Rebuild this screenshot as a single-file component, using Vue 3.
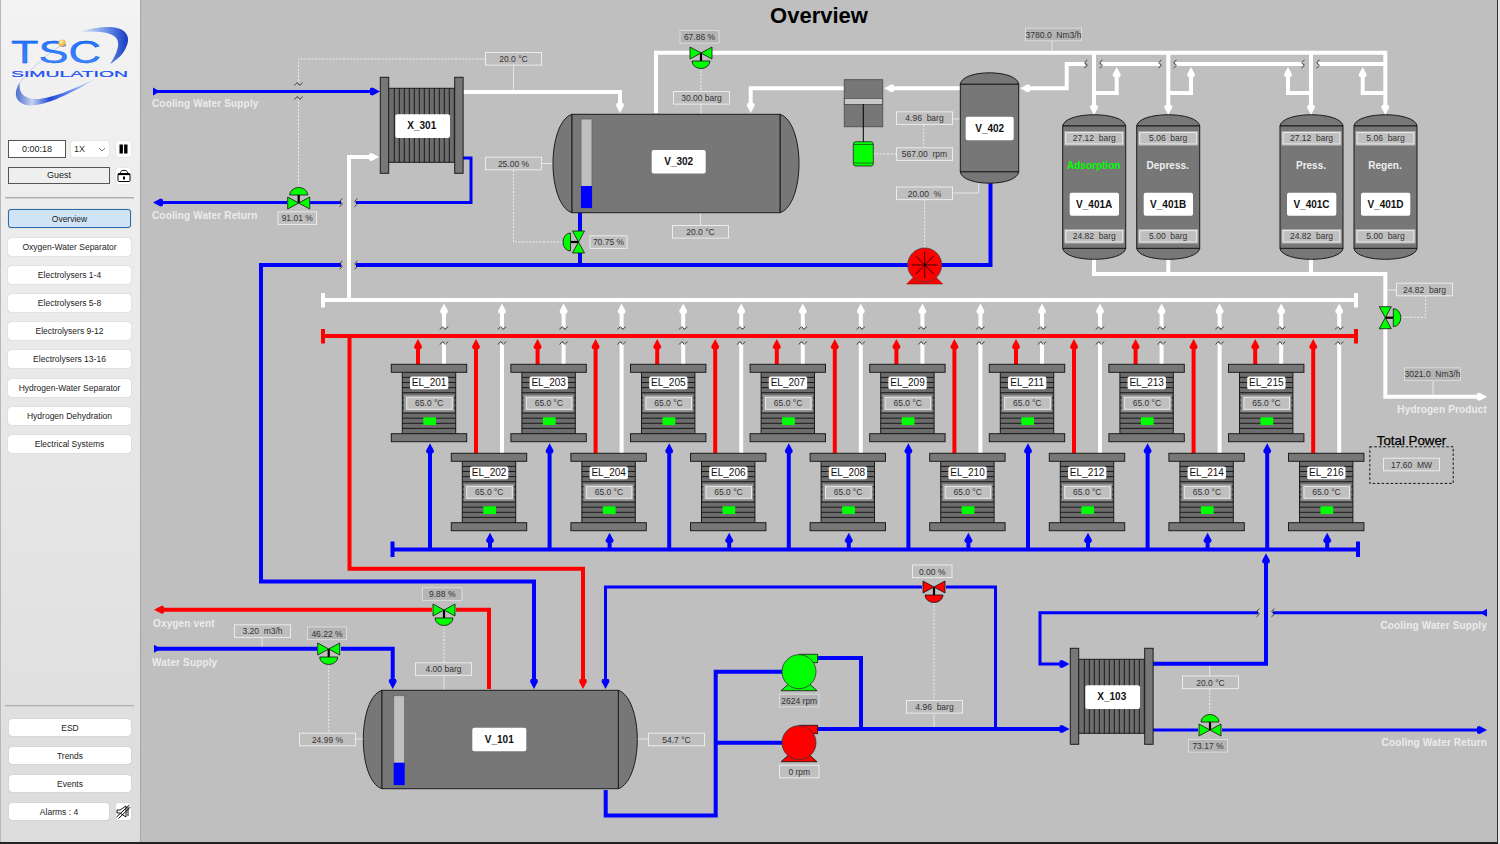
<template>
  <div class="screen">
    <aside class="sidebar">
      <svg class="logo" viewBox="0 0 124 84" width="124" height="84">
        <defs>
          <linearGradient id="swoosh" x1="0" y1="0" x2="1" y2="0">
            <stop offset="0" stop-color="#e4ebf9" />
            <stop offset="0.55" stop-color="#6d93ea" />
            <stop offset="1" stop-color="#1638c0" />
          </linearGradient>
          <linearGradient id="swoosh2" x1="0" y1="0" x2="1" y2="0">
            <stop offset="0" stop-color="#4a6ed0" />
            <stop offset="0.2" stop-color="#c4d2f0" />
            <stop offset="0.42" stop-color="#1f48d8" />
            <stop offset="0.7" stop-color="#6f97ee" />
            <stop offset="1" stop-color="#e8eefb" />
          </linearGradient>
          <linearGradient id="letters" x1="0" y1="0" x2="0" y2="1">
            <stop offset="0" stop-color="#1a72ff" />
            <stop offset="1" stop-color="#3f8cff" />
          </linearGradient>
          <radialGradient id="ball" cx="0.4" cy="0.35" r="0.7">
            <stop offset="0" stop-color="#fff2b0" />
            <stop offset="1" stop-color="#e09a10" />
          </radialGradient>
        </defs>
        <path d="M71 6 C85 1 100 0 108 2 C118 4 121 12 118 19 C115 28 108 34 101 38 C106 31 110 22 109 16 C108 8 95 4 71 6 Z" fill="url(#swoosh)" />
        <path d="M11 57 C5 64 5 74 14 78 C28 84 58 70 88 52 C65 63 42 73 27 73 C15 73 9 66 11 57 Z" fill="url(#swoosh2)" />
        <path d="M8 60 C22 42 38 28 54 18" fill="none" stroke="#9fb6e6" stroke-width="0.6" />
        <text x="2" y="37" class="logo-big" textLength="90" lengthAdjust="spacingAndGlyphs">TSC</text>
        <text x="2" y="51" class="logo-small" textLength="117" lengthAdjust="spacingAndGlyphs">SIMULATION</text>
        <circle cx="53" cy="17" r="3.6" fill="url(#ball)" />
      </svg>

      <div class="ctrl-row first">
        <div class="clock">0:00:18</div>
        <div class="speed">
          <span>1X</span>
          <svg width="8" height="5" viewBox="0 0 8 5"><path d="M1 1 L4 4 L7 1" fill="none" stroke="#777" stroke-width="1" /></svg>
        </div>
        <button class="icon-btn">
          <svg width="9" height="10" viewBox="0 0 9 10"><rect x="0.5" y="0.5" width="3.4" height="9" fill="#000" /><rect x="5.1" y="0.5" width="3.4" height="9" fill="#000" /></svg>
        </button>
      </div>
      <div class="ctrl-row second">
        <div class="user">Guest</div>
        <button class="icon-btn">
          <svg width="14" height="13" viewBox="0 0 14 13">
            <path d="M3.5 5.5 V3.5 C3.5 0.6 10.5 0.6 10.5 3.5 V5.5" fill="none" stroke="#000" stroke-width="1" />
            <rect x="1" y="4.5" width="12" height="8" rx="1" fill="#fff" stroke="#000" stroke-width="1" />
            <rect x="1" y="4.5" width="12" height="1.6" fill="#000" />
            <rect x="6" y="7.5" width="2" height="3" fill="#000" />
          </svg>
        </button>
      </div>

      <div class="divider top"></div>

      <nav class="nav">
        <button v-for="item in navItems" :key="item" class="nav-btn" :class="{ active: item === 'Overview' }">{{ item }}</button>
      </nav>

      <div class="bottom">
        <div class="divider"></div>
        <div class="bottom-list">
          <button v-for="item in bottomItems" :key="item" class="nav-btn small">{{ item }}</button>
          <div class="alarm-row">
            <button class="nav-btn small alarm">Alarms : 4</button>
            <button class="icon-btn mute">
              <svg width="15" height="15" viewBox="0 0 15 15">
                <path d="M1 6 H4 L10 2 V13 L4 9 H1 Z" fill="none" stroke="#000" stroke-width="0.9" />
                <path d="M12 3 V12" stroke="#000" stroke-width="0.9" />
                <path d="M0.5 13 L13.5 1 M2.5 14.5 L14.5 3" stroke="#000" stroke-width="1" />
              </svg>
            </button>
          </div>
        </div>
      </div>
    </aside>

    <main class="canvas">
      <svg class="diagram" viewBox="141 0 1356 842" width="1356" height="842">
        <text x="819" y="15" class="title">Overview</text>

        <!-- signal lines -->
        <path v-for="d in solidLinks" :key="d" :d="d" class="link" />
        <path v-for="d in dottedLinks" :key="d" :d="d" class="dotted" />

        <!-- pipes -->
        <path v-for="p in pipes" :key="p.d" :d="p.d" fill="none" :stroke="p.c" :stroke-width="p.w || 4" stroke-linejoin="miter" />
        <polygon v-for="a in arrows" :key="a.points" :points="a.points" :fill="a.c" />
        <path v-for="b in breaks" :key="b" :d="b" class="break" />

        <!-- heat exchangers -->
        <g v-for="x in exchangers" :key="x.name" :transform="`translate(${x.x} ${x.y})`">
          <rect x="8" y="11" width="67" height="74" class="steel dark" />
          <path v-for="n in 13" :key="n" :d="`M${9 + n * 5} 11 V85`" class="fin" />
          <rect x="0" y="0" width="8.4" height="96" class="steel" />
          <rect x="74.4" y="0" width="8.4" height="96" class="steel" />
          <rect x="15" y="37" width="54.7" height="23.7" rx="2" class="name-box" />
          <text x="41.5" y="48.6" class="name">{{ x.name }}</text>
        </g>

        <!-- horizontal vessels -->
        <g v-for="v in drums" :key="v.name">
          <path :d="v.cap" class="steel" />
          <path :d="v.cap2" class="steel" />
          <rect :x="v.x" :y="v.y" :width="v.w" :height="v.h" class="steel" />
          <rect :x="v.barX" :y="v.barY" width="11" :height="v.barH" class="bar" />
          <rect :x="v.barX" :y="v.levelY" width="11" :height="v.barY + v.barH - v.levelY" fill="#0000ff" />
          <rect :x="v.labelX" :y="v.labelY" width="54" height="23.6" rx="2" class="name-box" />
          <text :x="v.labelX + 27" :y="v.labelY + 11.8" class="name">{{ v.name }}</text>
        </g>

        <!-- V_402 -->
        <path d="M960.3 84.3 C962 69 1017 69 1018.7 84.3 Z" class="steel" />
        <path d="M960.3 171.7 C962 187 1017 187 1018.7 171.7 Z" class="steel" />
        <rect x="960.3" y="84.3" width="58.4" height="87.4" class="steel" />
        <rect x="965.7" y="116.7" width="48" height="23.6" rx="2" class="name-box" />
        <text x="989.7" y="128.3" class="name">V_402</text>

        <!-- adsorbers -->
        <g v-for="a in adsorbers" :key="a.name" :transform="`translate(${a.x} 0)`">
          <path d="M0 126 C2 111 61 111 63 126 Z" class="steel" />
          <path d="M0 248.3 C2 263 61 263 63 248.3 Z" class="steel" />
          <rect x="0" y="126" width="63" height="122.3" class="steel" />
          <rect x="1.5" y="131" width="60" height="14.7" fill="#a8a8a8" />
          <rect x="3" y="132.6" width="57" height="11.4" class="tag-box" />
          <text x="31.5" y="138" class="tag">{{ a.top }}</text>
          <text x="31" y="165.8" class="state" :fill="a.stateColor">{{ a.state }}</text>
          <rect x="7" y="192.7" width="49.3" height="23" rx="2" class="name-box" />
          <text x="31.5" y="204.1" class="name">{{ a.name }}</text>
          <rect x="1.5" y="229" width="60" height="14.7" fill="#a8a8a8" />
          <rect x="3" y="230.6" width="57" height="11.4" class="tag-box" />
          <text x="31.5" y="236" class="tag">{{ a.bottom }}</text>
        </g>

        <!-- compressor -->
        <rect x="844.3" y="79.7" width="38.4" height="47" fill="#777" stroke="#555" stroke-width="1" />
        <rect x="844.3" y="98.3" width="38.4" height="6" fill="#c8c8c8" stroke="#333" stroke-width="0.6" />
        <path d="M863.3 104 V142" stroke="#000" stroke-width="1" />
        <rect x="853.3" y="141.7" width="20" height="24.3" rx="2.5" fill="#00ff00" stroke="#222" stroke-width="0.8" />
        <path d="M853.3 144.5 H873.3 M853.3 163 H873.3" stroke="#222" stroke-width="0.6" />

        <!-- electrolysers -->
        <g v-for="e in electrolysers" :key="e.name" :transform="`translate(${e.x} ${e.y})`">
          <rect x="11" y="8" width="53.4" height="61.4" class="steel dark" />
          <path v-for="n in 11" :key="n" :d="`M11 ${8 + n * 5.1} H64.4`" class="fin" />
          <rect x="0" y="0" width="75.4" height="8" class="steel" />
          <rect x="0" y="69.4" width="75.4" height="8" class="steel" />
          <rect x="18.7" :y="e.ny - 6.3" width="38.3" height="12.6" rx="2" class="name-box" />
          <text x="37.8" :y="e.ny" class="el-name">{{ e.name }}</text>
          <rect x="12.7" y="30.7" width="50" height="16.7" fill="#999" />
          <rect x="15.4" y="33" width="45.6" height="12" class="tag-box" />
          <text x="38" y="39.2" class="tag">65.0 °C</text>
          <rect x="32" y="53" width="12.7" height="7.7" fill="#00ff00" />
        </g>

        <!-- valves -->
        <g v-for="v in valves" :key="v.x + '-' + v.y" :transform="`translate(${v.x} ${v.y}) rotate(${v.r})`">
          <path d="M0 0 V-8" stroke="#000" stroke-width="2.2" />
          <path d="M-9 -8 A9 7.5 0 0 1 9 -8 Z" :fill="v.c" class="sym" />
          <polygon points="-11,-6 -11,6 0,0" :fill="v.c" class="sym" />
          <polygon points="11,-6 11,6 0,0" :fill="v.c" class="sym" />
        </g>

        <!-- pumps -->
        <g v-for="p in pumps" :key="p.y" :transform="`translate(799 ${p.y})`">
          <polygon points="-18,19 18,19 9,11 -9,11" :fill="p.c" class="sym" />
          <polygon points="0,-17.4 18.6,-17.4 18.6,-9 10,-9" :fill="p.c" class="sym" />
          <circle r="17" :fill="p.c" stroke="#333" stroke-width="0.8" />
        </g>
        <g transform="translate(924.7 265)">
          <polygon points="-18,19 18,19 9,10 -9,10" fill="#ff0000" stroke="#7a0000" stroke-width="0.5" />
          <circle r="17" fill="#ff0000" stroke="#444" stroke-width="0.8" />
          <path v-for="n in 4" :key="n" d="M-13 0 H13" stroke="#000" stroke-width="0.8" :transform="`rotate(${n * 45})`" />
        </g>

        <!-- tags -->
        <g v-for="t in tags" :key="t.t + t.x">
          <rect :x="t.x" :y="t.y" :width="t.w" height="12.6" class="tag-box" :class="{ dim: t.dim }" />
          <text :x="t.x + t.w / 2" :y="t.y + 6.5" class="tag">{{ t.t }}</text>
        </g>

        <!-- stream labels -->
        <text x="152" y="103" class="stream">Cooling Water Supply</text>
        <text x="152" y="215" class="stream">Cooling Water Return</text>
        <text x="153" y="623" class="stream">Oxygen vent</text>
        <text x="152" y="662" class="stream">Water Supply</text>
        <text x="1487" y="409" class="stream end">Hydrogen Product</text>
        <text x="1487" y="625" class="stream end">Cooling Water Supply</text>
        <text x="1487" y="742" class="stream end">Cooling Water Return</text>

        <text x="1411.5" y="440" class="total">Total Power</text>
        <rect x="1369.8" y="446.8" width="83.4" height="36.6" class="dash" />
      </svg>
    </main>
  </div>
</template>

<script setup>
const navItems = [
  'Overview',
  'Oxygen-Water Separator',
  'Electrolysers 1-4',
  'Electrolysers 5-8',
  'Electrolysers 9-12',
  'Electrolysers 13-16',
  'Hydrogen-Water Separator',
  'Hydrogen Dehydration',
  'Electrical Systems'
]
const bottomItems = ['ESD', 'Trends', 'Events']

const BLUE = '#0000ff'
const RED = '#ff0000'
const WHITE = '#ffffff'
const GREEN = '#00ff00'
const STEP = 119.6

// builds an arrow head polygon, (x, y) is the tip
function arrow(x, y, dir, c, w = 8, l = 10) {
  const v = { u: [0, 1], d: [0, -1], l: [1, 0], r: [-1, 0] }[dir]
  const n = [v[1], v[0]]
  const pt = (a, b) => `${x + v[0] * a + n[0] * b},${y + v[1] * a + n[1] * b}`
  return {
    c,
    points: [pt(0, 0), pt(l * 0.75, w / 2), pt(l, w * 0.4), pt(l, -w * 0.4), pt(l * 0.75, -w / 2)].join(' ')
  }
}

const sBreak = (x, y) => `M${x + 1.5} ${y - 4} Q${x - 3} ${y - 1} ${x} ${y} Q${x + 3} ${y + 1} ${x - 1.5} ${y + 4}`
const tBreak = (x, y) => `M${x - 4} ${y + 1.5} Q${x - 1} ${y - 3} ${x} ${y} Q${x + 1} ${y + 3} ${x + 4} ${y - 1.5}`

const pipes = [
  // cooling water X_301
  { c: BLUE, w: 3, d: 'M153 91.5 H372' },
  { c: BLUE, w: 3, d: 'M160 202.6 H287' },
  { c: BLUE, w: 3, d: 'M310 202.6 H341' },
  { c: BLUE, w: 3, d: 'M356 202.6 H471 V158 H463' },
  // recirculation
  { c: BLUE, d: 'M341 265 H261 V581.5 H534 V680' },
  { c: BLUE, d: 'M356 265 H908' },
  { c: BLUE, d: 'M940 265 H990.5 V183' },
  { c: BLUE, d: 'M580 213 V232' },
  { c: BLUE, d: 'M580 252 V265' },
  // hydrogen
  { c: WHITE, d: 'M349 300 V157 H371' },
  { c: WHITE, d: 'M463 92 H620 V105' },
  { c: WHITE, d: 'M656 113 V52.7 H690' },
  { c: WHITE, d: 'M712 52.7 H1385.3 V107' },
  { c: WHITE, d: 'M960 88.3 H892' },
  { c: WHITE, d: 'M844 88.3 H750.7 V105' },
  { c: WHITE, d: 'M1028 88.3 H1066.7 V64 H1085' },
  { c: WHITE, d: 'M1101 64 H1160' },
  { c: WHITE, d: 'M1175 64 H1303' },
  { c: WHITE, d: 'M1318 64 H1385' },
  { c: WHITE, d: 'M1094 52.7 V107' },
  { c: WHITE, d: 'M1168.3 52.7 V107' },
  { c: WHITE, d: 'M1311 52.7 V107' },
  { c: WHITE, d: 'M1094 93 H1116.7 V75' },
  { c: WHITE, d: 'M1168.3 93 H1191 V75' },
  { c: WHITE, d: 'M1311 93 H1288 V75' },
  { c: WHITE, d: 'M1385.3 93 H1362.7 V75' },
  { c: WHITE, d: 'M1094 258 V274 H1385.3 V307' },
  { c: WHITE, d: 'M1168.3 258 V274' },
  { c: WHITE, d: 'M1311 258 V274' },
  { c: WHITE, d: 'M1385.3 328 V396.7 H1478' },
  // headers
  { c: WHITE, d: 'M323 300 H1356' },
  { c: WHITE, d: 'M323 293 V307.5' },
  { c: WHITE, d: 'M1356 293 V307.5' },
  { c: RED, d: 'M323 336 H1356' },
  { c: RED, d: 'M323 329 V343.5' },
  { c: RED, d: 'M1356 329 V343.5' },
  { c: BLUE, d: 'M392.5 549.5 H1358' },
  { c: BLUE, d: 'M392.5 541.5 V557' },
  { c: BLUE, d: 'M1358 541.5 V557' },
  // oxygen
  { c: RED, d: 'M349.5 336 V568.7 H583 V680' },
  { c: RED, d: 'M489 689 V609.7 H456' },
  { c: RED, d: 'M432 609.7 H163' },
  // water supply
  { c: BLUE, d: 'M154 648.7 H317' },
  { c: BLUE, d: 'M341 648.7 H392.7 V680' },
  // pumps loop
  { c: BLUE, d: 'M605.7 790 V815.5 H715.7 V671.7 H783' },
  { c: BLUE, d: 'M715.7 742.7 H783' },
  { c: BLUE, d: 'M817 658 H861 V729' },
  { c: BLUE, d: 'M817 729 H1060' },
  { c: BLUE, w: 3, d: 'M605.5 680 V587 H922' },
  { c: BLUE, w: 3, d: 'M946 587 H995.5 V729' },
  // X_103
  { c: BLUE, d: 'M1153 663.7 H1266 V563' },
  { c: BLUE, w: 3, d: 'M1153 730 H1198' },
  { c: BLUE, w: 3, d: 'M1222 730 H1478' },
  { c: BLUE, w: 3, d: 'M1486 612.7 H1273' },
  { c: BLUE, w: 3, d: 'M1258 612.7 H1040 V664 H1060' }
]

const arrows = [
  arrow(380, 91.5, 'r', BLUE),
  arrow(153, 202.6, 'l', BLUE),
  arrow(379, 157, 'r', WHITE),
  arrow(620, 113, 'd', WHITE),
  arrow(750.7, 113, 'd', WHITE),
  arrow(884, 88.3, 'l', WHITE),
  arrow(1020, 88.3, 'l', WHITE),
  arrow(1094, 115, 'd', WHITE),
  arrow(1168.3, 115, 'd', WHITE),
  arrow(1311, 115, 'd', WHITE),
  arrow(1385.3, 115, 'd', WHITE),
  arrow(1116.7, 67, 'u', WHITE),
  arrow(1191, 67, 'u', WHITE),
  arrow(1288, 67, 'u', WHITE),
  arrow(1362.7, 67, 'u', WHITE),
  arrow(1487, 396.7, 'r', WHITE),
  arrow(534, 689, 'd', BLUE),
  arrow(583, 689, 'd', RED),
  arrow(392.7, 689, 'd', BLUE),
  arrow(605.5, 689, 'd', BLUE),
  arrow(154, 609.7, 'l', RED),
  arrow(1069.5, 729, 'r', BLUE),
  arrow(1069.5, 664, 'r', BLUE),
  arrow(1266, 553.3, 'u', BLUE),
  arrow(1487, 730, 'r', BLUE),
  // feed markers, the flat side is on the outlet
  { c: BLUE, points: '153,87.5 153,95.5 160,91.5' },
  { c: BLUE, points: '154,644.7 154,652.7 161,648.7' },
  { c: BLUE, points: '1487,608.7 1487,616.7 1480,612.7' }
]

const breaks = [
  sBreak(341, 202.6), sBreak(356, 202.6), sBreak(341, 265), sBreak(356, 265),
  sBreak(1086, 64), sBreak(1101, 64), sBreak(1160, 64), sBreak(1175, 64),
  sBreak(1303, 64), sBreak(1318, 64), sBreak(1258, 612.7), sBreak(1273, 612.7),
  tBreak(298.5, 84), tBreak(298.5, 98)
]

const electrolysers = []
for (let k = 0; k < 8; k++) {
  const dx = k * STEP
  electrolysers.push({ name: 'EL_' + (201 + k * 2), x: 391.3 + dx, y: 364.3, ny: 18.6 })
  electrolysers.push({ name: 'EL_' + (202 + k * 2), x: 451.3 + dx, y: 453.3, ny: 19.6 })

  pipes.push({ c: RED, d: `M${418 + dx} 364.3 V348` })
  pipes.push({ c: RED, d: `M${476 + dx} 453.3 V348` })
  pipes.push({ c: WHITE, d: `M${444 + dx} 364.3 V343` })
  pipes.push({ c: WHITE, d: `M${444 + dx} 328 V312` })
  pipes.push({ c: WHITE, d: `M${502 + dx} 453.3 V343` })
  pipes.push({ c: WHITE, d: `M${502 + dx} 328 V312` })
  pipes.push({ c: BLUE, d: `M${430 + dx} 549.5 V452` })
  pipes.push({ c: BLUE, d: `M${490 + dx} 549.5 V540` })

  arrows.push(arrow(418 + dx, 339, 'u', RED))
  arrows.push(arrow(476 + dx, 339, 'u', RED))
  arrows.push(arrow(444 + dx, 303.5, 'u', WHITE))
  arrows.push(arrow(502 + dx, 303.5, 'u', WHITE))
  arrows.push(arrow(430 + dx, 443.3, 'u', BLUE))
  arrows.push(arrow(490 + dx, 532.7, 'u', BLUE))

  breaks.push(tBreak(444 + dx, 328), tBreak(444 + dx, 343), tBreak(502 + dx, 328), tBreak(502 + dx, 343))
}

const exchangers = [
  { name: 'X_301', x: 380.3, y: 77.3 },
  { name: 'X_103', x: 1070.3, y: 648.3 }
]

const drums = [
  {
    name: 'V_302', x: 572, y: 114.3, w: 208, h: 98.4,
    cap: 'M572 114.3 C560 118 553 140 553 163.5 C553 187 560 209 572 212.7 Z',
    cap2: 'M780 114.3 C792 118 799 140 799 163.5 C799 187 792 209 780 212.7 Z',
    barX: 581, barY: 119, barH: 89, levelY: 186, labelX: 651.7, labelY: 150
  },
  {
    name: 'V_101', x: 382, y: 690.3, w: 236.3, h: 98.4,
    cap: 'M382 690.3 C370 694 363.3 716 363.3 739.5 C363.3 763 370 785 382 788.7 Z',
    cap2: 'M618.3 690.3 C630 694 637.3 716 637.3 739.5 C637.3 763 630 785 618.3 788.7 Z',
    barX: 393.7, barY: 695.7, barH: 89.3, levelY: 762.7, labelX: 472.3, labelY: 727.7
  }
]

const adsorbers = [
  { name: 'V_401A', x: 1062.7, top: '27.12  barg', bottom: '24.82  barg', state: 'Adsorption', stateColor: GREEN },
  { name: 'V_401B', x: 1136.7, top: '5.06  barg', bottom: '5.00  barg', state: 'Depress.', stateColor: '#eeeeee' },
  { name: 'V_401C', x: 1280, top: '27.12  barg', bottom: '24.82  barg', state: 'Press.', stateColor: '#eeeeee' },
  { name: 'V_401D', x: 1354, top: '5.06  barg', bottom: '5.00  barg', state: 'Regen.', stateColor: '#eeeeee' }
]

const valves = [
  { x: 298.7, y: 203, r: 0, c: GREEN },
  { x: 701, y: 53, r: 180, c: GREEN },
  { x: 578.5, y: 242, r: -90, c: GREEN },
  { x: 1385.3, y: 317.7, r: 90, c: GREEN },
  { x: 444, y: 610, r: 180, c: GREEN },
  { x: 328.7, y: 649, r: 180, c: GREEN },
  { x: 934, y: 587, r: 180, c: RED },
  { x: 1210, y: 730, r: 0, c: GREEN }
]

const pumps = [
  { y: 671.7, c: GREEN },
  { y: 742.7, c: RED }
]

const tags = [
  { t: '20.0 °C', x: 485.5, y: 52.5, w: 56 },
  { t: '25.00 %', x: 485.5, y: 157.2, w: 56 },
  { t: '91.01 %', x: 278, y: 211.8, w: 38.5 },
  { t: '70.75 %', x: 590, y: 235.8, w: 37 },
  { t: '67.86 %', x: 680, y: 30.5, w: 39, dim: true },
  { t: '30.00 barg', x: 673.5, y: 91.5, w: 56 },
  { t: '20.0 °C', x: 672.5, y: 225.5, w: 56 },
  { t: '4.96  barg', x: 896.5, y: 111.8, w: 56 },
  { t: '567.00  rpm', x: 896.5, y: 147.8, w: 56 },
  { t: '20.00  %', x: 896.5, y: 187, w: 56 },
  { t: '3780.0  Nm3/h', x: 1025.5, y: 28.2, w: 56, dim: true },
  { t: '24.82  barg', x: 1396.5, y: 283.2, w: 56 },
  { t: '3021.0  Nm3/h', x: 1404.5, y: 367.8, w: 56, dim: true },
  { t: '17.60  MW', x: 1383.5, y: 458.2, w: 56 },
  { t: '9.88 %', x: 422.5, y: 587.8, w: 39.5, dim: true },
  { t: '46.22 %', x: 307.5, y: 627, w: 39, dim: true },
  { t: '3.20  m3/h', x: 234.5, y: 624.8, w: 56 },
  { t: '4.00 barg', x: 415.5, y: 662.8, w: 56 },
  { t: '24.99 %', x: 299.5, y: 733.2, w: 56 },
  { t: '54.7 °C', x: 648.5, y: 733.2, w: 56 },
  { t: '2624 rpm', x: 779.5, y: 694.2, w: 39.5, dim: true },
  { t: '0 rpm', x: 779.5, y: 765.2, w: 39.5 },
  { t: '0.00 %', x: 912.5, y: 565, w: 39.5 },
  { t: '4.96  barg', x: 906.5, y: 700.5, w: 56 },
  { t: '20.0 °C', x: 1182.5, y: 676, w: 56 },
  { t: '73.17 %', x: 1188.5, y: 739.5, w: 39, dim: true }
]

const solidLinks = [
  'M513.5 65 V92',
  'M542 163.5 H553',
  'M701 104 V114',
  'M700.5 213 V225',
  'M953 119 H960',
  'M953 193 H978.7 V182',
  'M1052 41 V53',
  'M1386 290 H1396',
  'M1433 381 V397',
  'M262 637 V649',
  'M444 676 V690',
  'M356 739 H363',
  'M637 739 H648',
  'M934 714 V729',
  'M1209.7 664 V676'
]

const dottedLinks = [
  'M485 59 H298.5 V84',
  'M298.5 98 V186',
  'M513.5 170 V242 H567',
  'M701 67 V91',
  'M873 154 H896',
  'M923.7 125 V147',
  'M924.7 200 V248',
  'M1425.7 296 V317.3 H1400',
  'M444 625 V662',
  'M328.7 663 V733',
  'M934 602 V700',
  'M1209.7 689 V716'
]
</script>

<style scoped>
.screen {
  display: flex;
  width: 1497px;
  height: 842px;
  border-right: 1px solid #333;
  border-bottom: 2px solid #222;
  font-family: "Liberation Sans", Arial, sans-serif;
}
.sidebar {
  display: flex;
  flex-direction: column;
  box-sizing: border-box;
  width: 141px;
  height: 842px;
  padding: 0 9px 0 7px;
  border-left: 1px solid #b8b8b8;
  border-right: 1px solid #a6a6a6;
  background: linear-gradient(#f3f3f3, #dcdcdc);
  flex-shrink: 0;
}
.logo {
  display: block;
  margin: 26px 0 0 1px;
}
.ctrl-row {
  display: flex;
  align-items: center;
}
.ctrl-row.first {
  margin-top: 30px;
  height: 18px;
}
.ctrl-row.second {
  margin-top: 9px;
  height: 17px;
}
.clock {
  box-sizing: border-box;
  width: 58px;
  height: 18px;
  margin-right: 5px;
  background: #fff;
  border: 1px solid #555;
  font-size: 9px;
  line-height: 16px;
  text-align: center;
  color: #222;
}
.speed {
  display: flex;
  align-items: center;
  justify-content: space-between;
  box-sizing: border-box;
  width: 38px;
  height: 16px;
  margin-right: 7px;
  padding: 0 3px;
  background: #fff;
  border-radius: 2px;
  box-shadow: 0 0 1px #aaa;
  font-size: 9px;
  color: #333;
}
.icon-btn {
  display: flex;
  align-items: center;
  justify-content: center;
  width: 15px;
  height: 16px;
  padding: 0;
  border: none;
  border-radius: 2px;
  background: #fff;
  box-shadow: 0 0 1px #aaa;
}
.user {
  box-sizing: border-box;
  width: 102px;
  height: 17px;
  margin-right: 6px;
  background: #efefef;
  border: 1px solid #555;
  font-size: 9px;
  line-height: 15px;
  text-align: center;
  color: #222;
}
.divider {
  height: 1px;
  margin: 0 -3px;
  background: #b0b0b0;
  border-bottom: 1px solid #d0d0d0;
}
.divider.top {
  margin-top: 13px;
}
.nav {
  display: flex;
  flex-direction: column;
  gap: 10.1px;
  margin-top: 10px;
}
.nav-btn {
  box-sizing: border-box;
  width: 123px;
  height: 18px;
  padding: 0;
  border: none;
  border-radius: 3px;
  background: #fff;
  box-shadow: 0 0 1px #999;
  font-family: inherit;
  font-size: 8.5px;
  color: #222;
}
.nav-btn.active {
  height: 19px;
  background: #cfe4f7;
  border: 1px solid #2b6ca3;
}
.bottom {
  margin-top: auto;
  padding-bottom: 22px;
}
.bottom-list {
  display: flex;
  flex-direction: column;
  gap: 11px;
  margin-top: 12px;
  padding-left: 1px;
}
.nav-btn.small {
  width: 122px;
  height: 17px;
}
.alarm-row {
  display: flex;
  align-items: center;
  gap: 7px;
}
.nav-btn.small.alarm {
  width: 100px;
}
.icon-btn.mute {
  height: 17px;
}
.canvas {
  flex: 1;
  background: #bfbfbf;
  overflow: hidden;
}
.diagram {
  display: block;
}
.logo-big {
  font-size: 31px;
  fill: url(#letters);
  stroke: #0a45e8;
  stroke-width: 0.3;
}
.logo-small {
  font-size: 9.5px;
  fill: #1a50f0;
  stroke: #1a50f0;
  stroke-width: 0.2;
}
.title {
  font-size: 22px;
  font-weight: bold;
  text-anchor: middle;
  dominant-baseline: central;
  fill: #000;
}
.link {
  fill: none;
  stroke: #e6e6e6;
  stroke-width: 1;
}
.dotted {
  fill: none;
  stroke: #ededed;
  stroke-width: 1;
  stroke-dasharray: 2 1.5;
}
.break {
  fill: none;
  stroke: #222;
  stroke-width: 0.8;
}
.steel {
  fill: #777;
  stroke: #1c1c1c;
  stroke-width: 1;
}
.steel.dark {
  fill: #6c6c6c;
}
.fin {
  stroke: #111;
  stroke-width: 0.9;
}
.name-box {
  fill: #fff;
}
.name {
  font-size: 10px;
  font-weight: bold;
  text-anchor: middle;
  dominant-baseline: central;
  fill: #111;
}
.el-name {
  font-size: 10px;
  text-anchor: middle;
  dominant-baseline: central;
  fill: #111;
}
.bar {
  fill: #bfbfbf;
  stroke: #666;
  stroke-width: 0.8;
}
.tag-box {
  fill: #bfbfbf;
  stroke: #ececec;
  stroke-width: 1;
}
.tag-box.dim {
  fill: #b4b4b4;
  stroke: #dcdcdc;
}
.tag {
  font-size: 8.5px;
  text-anchor: middle;
  dominant-baseline: central;
  white-space: pre;
  fill: #333;
}
.state {
  font-size: 10px;
  font-weight: bold;
  text-anchor: middle;
  dominant-baseline: central;
}
.sym {
  stroke: #111;
  stroke-width: 0.8;
}
.stream {
  font-size: 10px;
  font-weight: bold;
  letter-spacing: 0.15px;
  dominant-baseline: central;
  fill: #ececec;
}
.stream.end {
  text-anchor: end;
}
.total {
  font-size: 13.3px;
  text-anchor: middle;
  dominant-baseline: central;
  fill: #000;
  stroke: #000;
  stroke-width: 0.25;
}
.dash {
  fill: none;
  stroke: #111;
  stroke-width: 1;
  stroke-dasharray: 2.5 2;
}
</style>

<style>
html,
body {
  margin: 0;
  background: #e4e4e4;
  overflow: hidden;
}
</style>
